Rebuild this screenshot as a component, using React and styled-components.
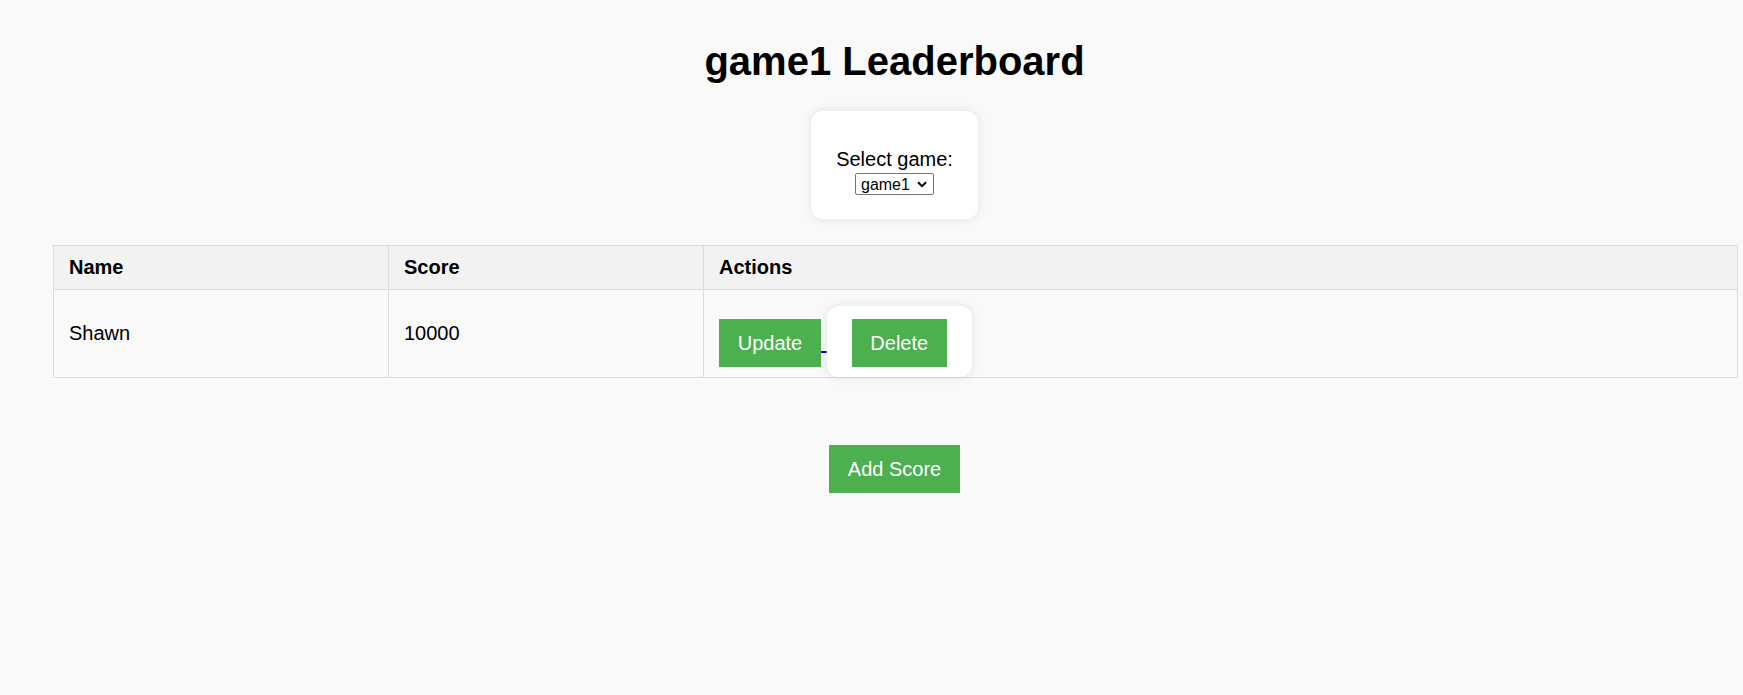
import styled, { createGlobalStyle } from 'styled-components'

const GlobalStyle = createGlobalStyle`
  body {
    margin: 0;
    background: #f9f9f9;
    color: #000;
    font-family: 'Liberation Sans', Arial, sans-serif;
    font-size: 20px;
  }
`

const Page = styled.div`
  padding: 38px 7px 40px 53px;
  text-align: center;
`

const Title = styled.h1`
  margin: 0 0 27px;
  font-size: 40px;
  font-weight: bold;
  line-height: 46px;
`

const Panel = styled.div`
  display: inline-block;
  background: #fff;
  border-radius: 12px;
  box-shadow: 0 0 10px rgba(0, 0, 0, 0.1);
  padding: ${(p) => p.$pad};
  vertical-align: baseline;
`

const Label = styled.label`
  display: block;
`

const SelectWrap = styled.span`
  position: relative;
  display: inline-block;
  vertical-align: top;
  margin-top: 2px;
`

const Select = styled.select`
  appearance: none;
  display: block;
  width: 79px;
  height: 22px;
  margin: 0;
  padding: 0 0 0 5px;
  border: 1px solid #767676;
  border-radius: 2px;
  background: #fff;
  color: #000;
  font-family: 'Liberation Sans', Arial, sans-serif;
  font-size: 16px;
`

const Chevron = styled.svg`
  position: absolute;
  right: 7px;
  top: 8px;
  pointer-events: none;
`

const Table = styled.table`
  width: calc(100% + 2px);
  margin-top: 26px;
  border-collapse: collapse;
  table-layout: fixed;
  text-align: left;
`

const Th = styled.th`
  background: #f2f2f2;
  border: 1px solid #ddd;
  padding: 10px 15px;
  font-weight: bold;
  line-height: 23px;
`

const Td = styled.td`
  border: 1px solid #ddd;
  padding: ${(p) => (p.$actions ? '16px 15px 0' : '10px 15px')};
  line-height: 23px;
`

const Button = styled.button`
  background: #4caf50;
  color: #fff;
  border: none;
  padding: 12.5px 18.75px;
  font-family: 'Liberation Sans', Arial, sans-serif;
  font-size: 20px;
  line-height: 23px;
  cursor: pointer;
  margin-top: ${(p) => p.$top || 0};
`

const Link = styled.a`
  color: #00e;
  text-decoration: underline;
`

export default function App() {
  return (
    <>
      <GlobalStyle />
      <Page>
        <Title>game1 Leaderboard</Title>
        <Panel $pad="37px 25px 24px">
          <Label htmlFor="game">Select game:</Label>
          <SelectWrap>
            <Select id="game" defaultValue="game1">
              <option value="game1">game1</option>
              <option value="game2">game2</option>
            </Select>
            <Chevron width="10" height="7" viewBox="0 0 10 7">
              <path d="M1 1.2 L5 5.2 L9 1.2" fill="none" stroke="#000" strokeWidth="2" />
            </Chevron>
          </SelectWrap>
        </Panel>
        <Table>
          <colgroup>
            <col style={{ width: 335 }} />
            <col style={{ width: 315 }} />
            <col />
          </colgroup>
          <thead>
            <tr>
              <Th>Name</Th>
              <Th>Score</Th>
              <Th>Actions</Th>
            </tr>
          </thead>
          <tbody>
            <tr>
              <Td>Shawn</Td>
              <Td>10000</Td>
              <Td $actions>
                <Link href="#update">
                  <Button>Update</Button>{' '}
                </Link>
                <Panel $pad="13px 25px 10px">
                  <Button>Delete</Button>
                </Panel>
              </Td>
            </tr>
          </tbody>
        </Table>
        <Button $top="67px">Add Score</Button>
      </Page>
    </>
  )
}
